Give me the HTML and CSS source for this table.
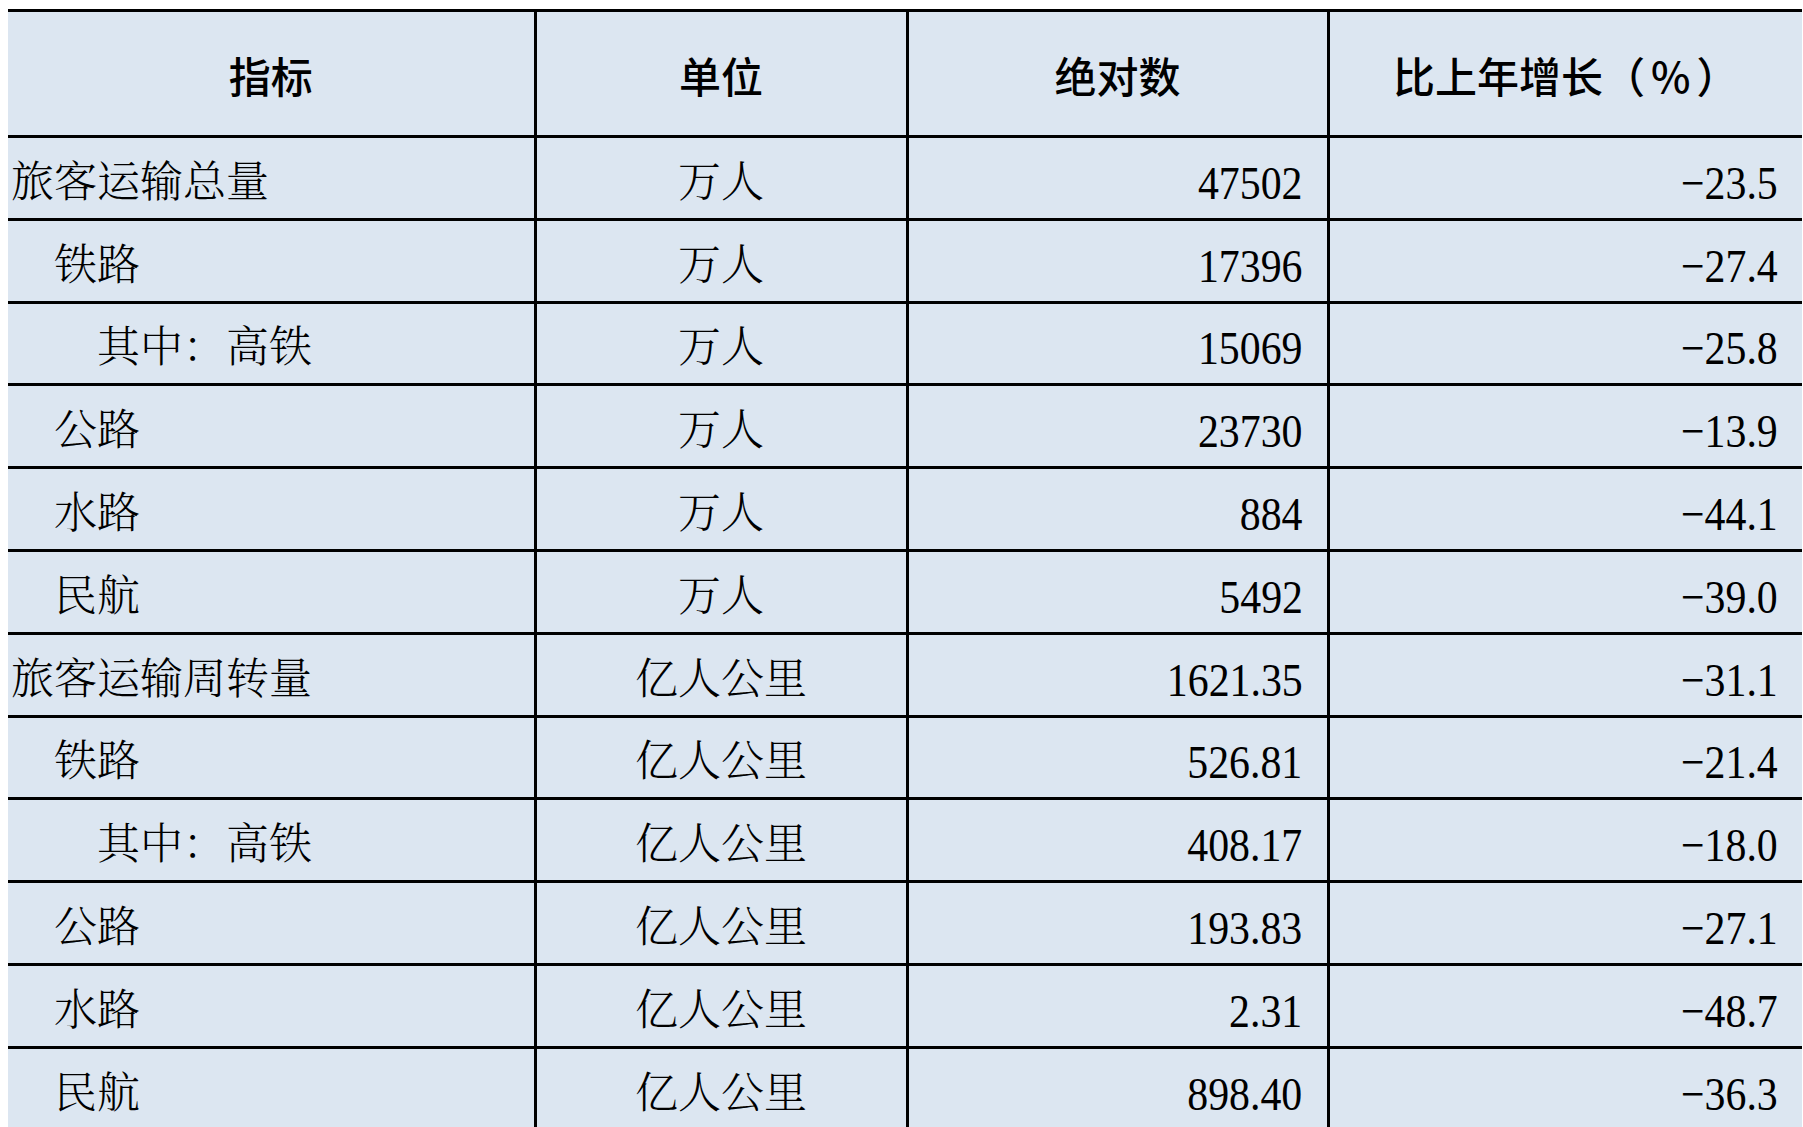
FILE: index.html
```html
<!DOCTYPE html>
<html lang="zh-CN">
<head>
<meta charset="utf-8">
<title>旅客运输</title>
<link rel="stylesheet" href="styles.css">
</head>
<body>
<table class="stats">
  <colgroup>
    <col class="c1"><col class="c2"><col class="c3"><col class="c4">
  </colgroup>
  <thead>
    <tr class="head">
      <th>指标</th><th>单位</th><th>绝对数</th><th>比上年增长（<span class="pct">%</span>）</th>
    </tr>
  </thead>
  <tbody>
    <tr><td class="name">旅客运输总量</td><td class="unit">万人</td><td class="num"><span>47502</span></td><td class="num"><span>−23.5</span></td></tr>
    <tr><td class="name l1">铁路</td><td class="unit">万人</td><td class="num"><span>17396</span></td><td class="num"><span>−27.4</span></td></tr>
    <tr><td class="name l2">其中：高铁</td><td class="unit">万人</td><td class="num"><span>15069</span></td><td class="num"><span>−25.8</span></td></tr>
    <tr><td class="name l1">公路</td><td class="unit">万人</td><td class="num"><span>23730</span></td><td class="num"><span>−13.9</span></td></tr>
    <tr><td class="name l1">水路</td><td class="unit">万人</td><td class="num"><span>884</span></td><td class="num"><span>−44.1</span></td></tr>
    <tr><td class="name l1">民航</td><td class="unit">万人</td><td class="num"><span>5492</span></td><td class="num"><span>−39.0</span></td></tr>
    <tr><td class="name">旅客运输周转量</td><td class="unit">亿人公里</td><td class="num"><span>1621.35</span></td><td class="num"><span>−31.1</span></td></tr>
    <tr><td class="name l1">铁路</td><td class="unit">亿人公里</td><td class="num"><span>526.81</span></td><td class="num"><span>−21.4</span></td></tr>
    <tr><td class="name l2">其中：高铁</td><td class="unit">亿人公里</td><td class="num"><span>408.17</span></td><td class="num"><span>−18.0</span></td></tr>
    <tr><td class="name l1">公路</td><td class="unit">亿人公里</td><td class="num"><span>193.83</span></td><td class="num"><span>−27.1</span></td></tr>
    <tr><td class="name l1">水路</td><td class="unit">亿人公里</td><td class="num"><span>2.31</span></td><td class="num"><span>−48.7</span></td></tr>
    <tr><td class="name l1">民航</td><td class="unit">亿人公里</td><td class="num"><span>898.40</span></td><td class="num"><span>−36.3</span></td></tr>
  </tbody>
</table>
</body>
</html>
```
FILE: styles.css
```css
html, body {
  margin: 0;
  padding: 0;
  background: #ffffff;
  overflow: hidden;
}

.stats {
  margin: 9px 0 0 8px;
  width: 1794px;
  border-collapse: collapse;
  table-layout: fixed;
  background: #dce6f1;
  color: #000;
}

.c1 { width: 527px; }
.c2 { width: 372px; }
.c3 { width: 421px; }
.c4 { width: 474px; }

.stats th,
.stats td {
  box-sizing: border-box;
  border-top: 3px solid #000;
  border-bottom: 3px solid #000;
  border-left: 3px solid #000;
  padding: 0;
  vertical-align: middle;
  white-space: nowrap;
}

.stats th:first-child,
.stats td:first-child {
  border-left: none;
}

.stats .head th {
  height: 126px;
  font-family: "Noto Sans CJK SC", sans-serif;
  font-weight: 500;
  font-size: 42px;
  text-align: center;
  line-height: 1;
  padding-top: 2px;
}

.pct {
  margin: 0 6px;
}

.stats td {
  height: 82.8px;
  line-height: 1;
  padding-top: 1px;
  padding-bottom: 0;
}

.stats .name,
.stats .unit {
  font-family: "Noto Serif CJK SC", "Noto Sans CJK SC", sans-serif;
  font-weight: 300;
  font-size: 43px;
}

.stats .name { padding-left: 3px; text-align: left; }
.stats .name.l1 { padding-left: 46px; }
.stats .name.l2 { padding-left: 89px; }

.stats .unit { text-align: center; }

.stats .num {
  text-align: right;
  padding-right: 24px;
  font-family: "Liberation Serif", "Times New Roman", serif;
  font-size: 47px;
  padding-top: 11px;
}

.num span {
  display: inline-block;
  transform: scaleX(0.89);
  transform-origin: right center;
}
```
